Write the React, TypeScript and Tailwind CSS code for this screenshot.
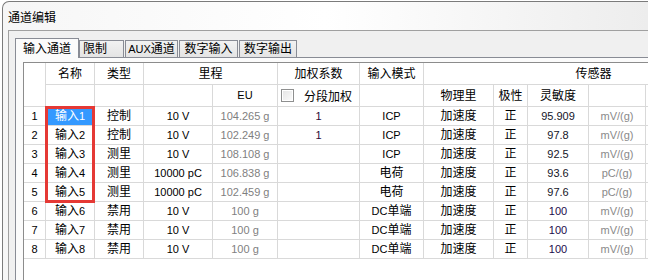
import React from "react";

const CJK = /[\u4e00-\u9fff]/;

// CJK glyphs at 12px, latin at 11px like the original dialog font
function T({ s }: { s: string }) {
  return (
    <>
      {s
        .split(/([\u4e00-\u9fff]+)/)
        .filter(Boolean)
        .map((p, i) => (
          <span key={i} className={CJK.test(p) ? "text-[12px]" : "text-[11px]"}>
            {p}
          </span>
        ))}
    </>
  );
}

const rows = [
  { name: "输入1", type: "控制", range: "10 V", eu: "104.265 g", w: "1", mode: "ICP", sens: "95.909", unit: "mV/(g)" },
  { name: "输入2", type: "控制", range: "10 V", eu: "102.249 g", w: "1", mode: "ICP", sens: "97.8", unit: "mV/(g)" },
  { name: "输入3", type: "测里", range: "10 V", eu: "108.108 g", w: "", mode: "ICP", sens: "92.5", unit: "mV/(g)" },
  { name: "输入4", type: "测里", range: "10000 pC", eu: "106.838 g", w: "", mode: "电荷", sens: "93.6", unit: "pC/(g)" },
  { name: "输入5", type: "测里", range: "10000 pC", eu: "102.459 g", w: "", mode: "电荷", sens: "97.6", unit: "pC/(g)" },
  { name: "输入6", type: "禁用", range: "10 V", eu: "100 g", w: "", mode: "DC单端", sens: "100", unit: "mV/(g)" },
  { name: "输入7", type: "禁用", range: "10 V", eu: "100 g", w: "", mode: "DC单端", sens: "100", unit: "mV/(g)" },
  { name: "输入8", type: "禁用", range: "10 V", eu: "100 g", w: "", mode: "DC单端", sens: "100", unit: "mV/(g)" },
];

const cell = "flex items-center justify-center border-b border-r border-[#d9d9d9] leading-none whitespace-nowrap";

export default function App() {
  return (
    <div className="h-[280px] w-[648px] overflow-hidden bg-white pl-[2px] pt-px font-['Liberation_Sans','Noto_Sans_CJK_SC',sans-serif] text-black">
      <div className="flex h-full flex-col rounded-tl-[7px] border-l border-t border-[#7b7b7b] bg-gradient-to-r from-[#f6f6f6] via-white to-[#ededed]">
        <div className="flex h-[28px] items-center pl-[5px] pt-[3px] text-[12px] leading-none">通道编辑</div>

        <div className="flex flex-1 flex-col pl-[5px]">
          <div className="flex flex-1 flex-col border-l border-t border-[#a0a0a0] bg-[#f0f0f0] pl-[6px] pt-[7px]">
            {/* tabs */}
            <div className="flex h-[19px] items-start text-[12px] leading-none">
              <div className="relative z-10 flex h-[20px] w-[64px] items-center justify-center border-x border-t border-[#898c95] bg-[#fbfbfb]">
                <T s="输入通道" />
              </div>
              <div className="mt-[2px] flex h-[17px] w-[45px] items-center border-x border-t border-[#898c95] bg-gradient-to-b from-[#f2f2f2] to-[#e4e4e4] pl-[3px]">
                <T s="限制" />
              </div>
              <div className="ml-px mt-[2px] flex h-[17px] w-[53px] items-center justify-center border-x border-t border-[#898c95] bg-gradient-to-b from-[#f2f2f2] to-[#e4e4e4]">
                <T s="AUX通道" />
              </div>
              <div className="ml-px mt-[2px] flex h-[17px] w-[59px] items-center justify-center border-x border-t border-[#898c95] bg-gradient-to-b from-[#f2f2f2] to-[#e4e4e4]">
                <T s="数字输入" />
              </div>
              <div className="ml-px mt-[2px] flex h-[17px] w-[58px] items-center justify-center border-x border-t border-[#898c95] bg-gradient-to-b from-[#f2f2f2] to-[#e4e4e4]">
                <T s="数字输出" />
              </div>
            </div>

            {/* tab panel */}
            <div className="flex flex-1 flex-col border-l border-t border-[#898c95] bg-[#fbfbfb] pl-[7px] pt-[4px]">
              <div className="relative flex-1 border-l border-t border-[#8c8c8c] bg-white">
                <div className="grid w-max grid-cols-[22px_49px_49px_69px_65px_82px_64px_70px_34px_61px_57px_118px] grid-rows-[22px_22px_repeat(8,19px)]">
                  {/* header row 1 */}
                  <div className={cell + " row-span-2"} />
                  <div className={cell}><T s="名称" /></div>
                  <div className={cell}><T s="类型" /></div>
                  <div className={cell + " col-span-2"}><T s="里程" /></div>
                  <div className={cell}><T s="加权系数" /></div>
                  <div className={cell}><T s="输入模式" /></div>
                  <div className={cell + " col-span-5"}><T s="传感器" /></div>

                  {/* header row 2 */}
                  <div className={cell} />
                  <div className={cell} />
                  <div className={cell} />
                  <div className={cell}><T s="EU" /></div>
                  <div className={cell + " justify-start pl-[3px]"}>
                    <span className="flex h-[13px] w-[13px] items-center justify-center border border-[#8e8f8f] bg-white">
                      <span className="h-[9px] w-[9px] bg-gradient-to-br from-[#e6e6e6] to-[#fafafa]" />
                    </span>
                    <span className="ml-[10px]"><T s="分段加权" /></span>
                  </div>
                  <div className={cell} />
                  <div className={cell}><T s="物理里" /></div>
                  <div className={cell}><T s="极性" /></div>
                  <div className={cell}><T s="灵敏度" /></div>
                  <div className={cell} />
                  <div className={cell} />

                  {/* data rows */}
                  {rows.map((r, i) => (
                    <React.Fragment key={r.name}>
                      <div className={cell}><T s={String(i + 1)} /></div>
                      <div className={cell + (i === 0 ? " bg-[#3399ff] text-white" : "")}><T s={r.name} /></div>
                      <div className={cell}><T s={r.type} /></div>
                      <div className={cell}><T s={r.range} /></div>
                      <div className={cell + " text-[#7f7f7f]"}><T s={r.eu} /></div>
                      <div className={cell + " text-[#2a0838]"}><T s={r.w} /></div>
                      <div className={cell}><T s={r.mode} /></div>
                      <div className={cell}><T s="加速度" /></div>
                      <div className={cell}><T s="正" /></div>
                      <div className={cell + (i < 5 ? " text-[#141428]" : " text-[#1c0a4c]")}><T s={r.sens} /></div>
                      <div className={cell + " text-[#8a8a8a]"}><T s={r.unit} /></div>
                      <div className={cell} />
                    </React.Fragment>
                  ))}
                </div>

                {/* red highlight around the name column */}
                <div className="pointer-events-none absolute left-[21px] top-[43px] h-[97px] w-[50px] border-[3px] border-[#e53935]" />
              </div>
            </div>
          </div>
        </div>
      </div>
    </div>
  );
}
